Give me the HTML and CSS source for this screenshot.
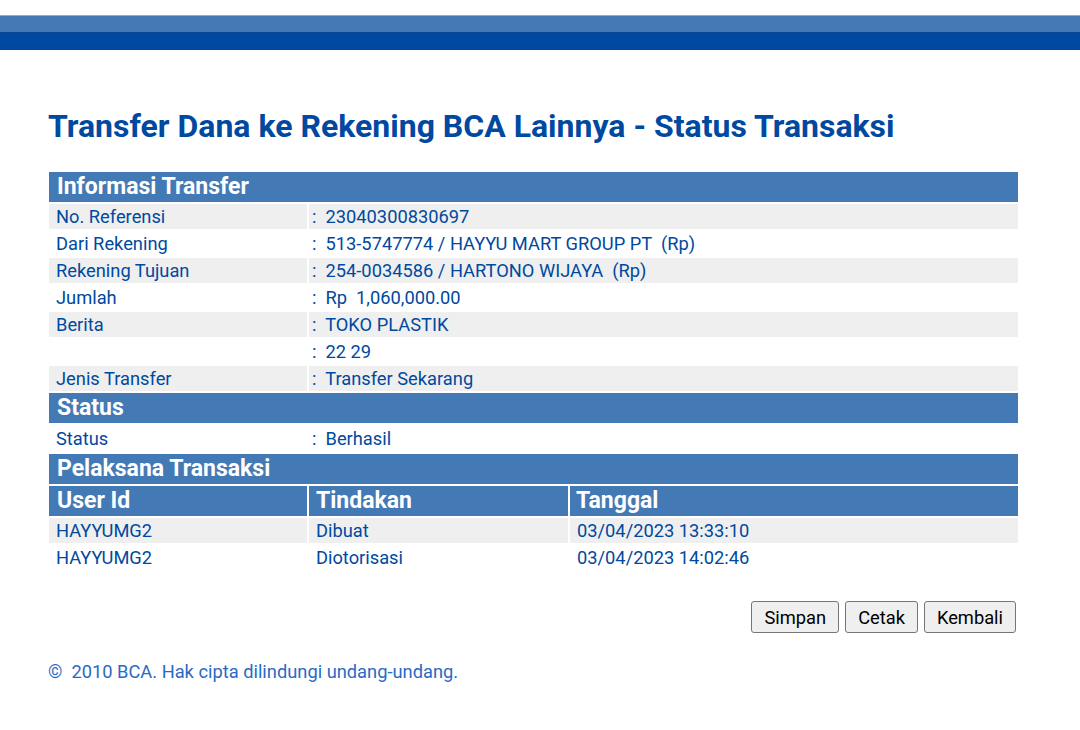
FILE: index.html
```html
<!DOCTYPE html>
<html lang="id">
<head>
    <meta charset="UTF-8">
    <meta name="viewport" content="width=device-width, initial-scale=1.0">
    <title>Transfer Dana ke Rekening BCA Lainnya - Status Transaksi</title>
    <link rel="stylesheet" href="styles.css">
</head>
<body>
    <div class="topbar">
        <div class="topbar-light"></div>
        <div class="topbar-dark"></div>
    </div>

    <div class="content">
        <h1>Transfer Dana ke Rekening BCA Lainnya - Status Transaksi</h1>

        <table class="info">
            <tr><td class="section" colspan="3">Informasi Transfer</td></tr>
            <tr class="alt"><td class="label">No. Referensi</td><td class="value" colspan="2">:&nbsp; 23040300830697</td></tr>
            <tr><td class="label">Dari Rekening</td><td class="value" colspan="2">:&nbsp; 513-5747774 / HAYYU MART GROUP PT &nbsp;(Rp)</td></tr>
            <tr class="alt"><td class="label">Rekening Tujuan</td><td class="value" colspan="2">:&nbsp; 254-0034586 / HARTONO WIJAYA &nbsp;(Rp)</td></tr>
            <tr><td class="label">Jumlah</td><td class="value" colspan="2">:&nbsp; Rp &nbsp;1,060,000.00</td></tr>
            <tr class="alt"><td class="label">Berita</td><td class="value" colspan="2">:&nbsp; TOKO PLASTIK</td></tr>
            <tr><td class="label"></td><td class="value" colspan="2">:&nbsp; 22 29</td></tr>
            <tr class="alt"><td class="label">Jenis Transfer</td><td class="value" colspan="2">:&nbsp; Transfer Sekarang</td></tr>

            <tr><td class="section" colspan="3">Status</td></tr>
            <tr class="tall"><td class="label">Status</td><td class="value" colspan="2">:&nbsp; Berhasil</td></tr>

            <tr><td class="section" colspan="3">Pelaksana Transaksi</td></tr>
            <tr>
                <td class="section">User Id</td>
                <td class="section col-mid">Tindakan</td>
                <td class="section">Tanggal</td>
            </tr>
            <tr class="alt"><td>HAYYUMG2</td><td>Dibuat</td><td>03/04/2023 13:33:10</td></tr>
            <tr><td>HAYYUMG2</td><td>Diotorisasi</td><td>03/04/2023 14:02:46</td></tr>
        </table>

        <div class="actions">
            <button type="button">Simpan</button>
            <button type="button">Cetak</button>
            <button type="button">Kembali</button>
        </div>

        <p class="footer">&copy;&nbsp; 2010 BCA. Hak cipta dilindungi undang-undang.</p>
    </div>
</body>
</html>
```

FILE: styles.css
```css
body {
    margin: 0;
    background-color: #fff;
    font-family: Roboto, "Liberation Sans", Arial, sans-serif;
    color: #0049a0;
}

.topbar {
    padding-top: 15px;
}

.topbar-light {
    height: 17px;
    background-color: #437ab5;
    border-top: 1px solid #8aaed4;
    box-sizing: border-box;
}

.topbar-dark {
    height: 18px;
    background-color: #0049a0;
    border-top: 1px solid #0a4590;
    box-sizing: border-box;
}

.content {
    padding: 0 0 0 47px;
}

h1 {
    margin: 56px 0 24px 1px;
    font-size: 32px;
    font-weight: bold;
    color: #0049a0;
    line-height: 40px;
}

.info {
    width: 973px;
    border-spacing: 2px;
    font-size: 18.3px;
    color: #0049a0;
}

.info td {
    height: 25px;
    padding: 0 7px;
    line-height: 25px;
}

.info tr.alt td {
    background-color: #efefef;
}

.info tr.tall td {
    height: 27px;
}

.info td.label {
    width: 244px;
}

.info td.value {
    padding-left: 3px;
}

.info td.section {
    height: 30px;
    padding: 0 6px;
    background-color: #437ab5;
    color: #fff;
    font-size: 23px;
    font-weight: bold;
    line-height: 30px;
}

.info td.section:first-child {
    padding-left: 8px;
}

.info td.col-mid {
    width: 246px;
    padding-left: 7px;
}

.actions {
    display: flex;
    justify-content: flex-end;
    gap: 6px;
    width: 969px;
    margin-top: 29px;
}

button {
    height: 32px;
    padding: 0 12px;
    font-family: Roboto, "Liberation Sans", Arial, sans-serif;
    font-size: 18.3px;
    color: #000;
    background-color: #efefef;
    border: 1px solid #767676;
    border-radius: 3px;
}

.footer {
    margin: 28px 0 0 1px;
    font-size: 18.3px;
    color: #2a6ac4;
}
```
